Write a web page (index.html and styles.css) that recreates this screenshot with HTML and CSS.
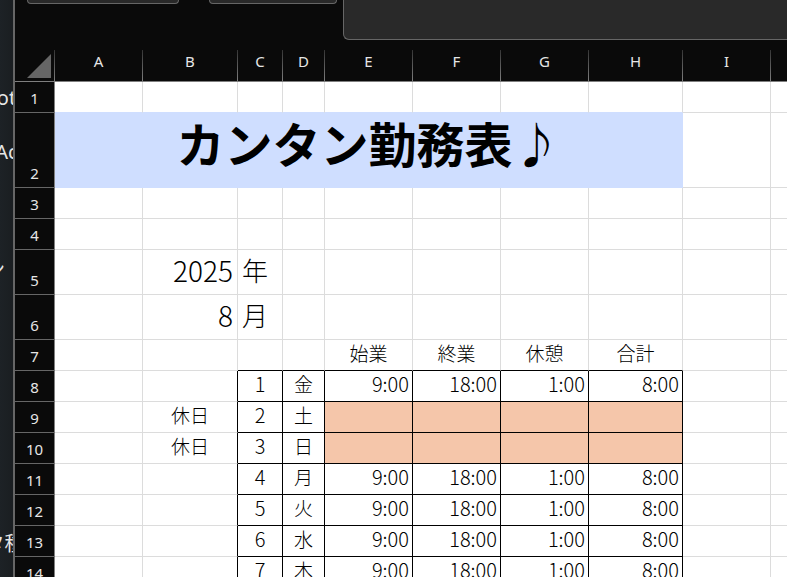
FILE: index.html
```html
<!DOCTYPE html>
<html lang="ja">
<head>
<meta charset="utf-8">
<title>カンタン勤務表</title>
<link rel="stylesheet" href="styles.css">
</head>
<body>
<aside class="side">
  <div class="side-item side-first">ot</div>
  <div class="side-item side-start">Ac</div>
  <div class="side-item side-tail">ン</div>
  <div class="side-item side-last">タ種</div>
</aside>
<main class="app">
  <div class="toolbar">
    <input class="name-box" type="text" aria-label="名前ボックス">
    <div class="tool-group"></div>
    <textarea class="formula" aria-label="数式バー"></textarea>
  </div>
  <table class="sheet">
    <colgroup><col class="w-head"><col class="w-m"><col class="w-b"><col class="w-c"><col class="w-d"><col class="w-m"><col class="w-m"><col class="w-m"><col class="w-h"><col class="w-m"><col></colgroup>
    <thead>
      <tr><th class="corner"><svg width="24" height="24" viewBox="0 0 24 24"><path d="M24 0V24H0Z" fill="#666"/></svg></th><th>A</th><th>B</th><th>C</th><th>D</th><th>E</th><th>F</th><th>G</th><th>H</th><th>I</th><th></th></tr>
    </thead>
    <tbody>
      <tr class="above-title"><th>1</th><td></td><td></td><td></td><td></td><td></td><td></td><td></td><td></td><td></td><td></td></tr>
      <tr class="title-row"><th>2</th><td class="title" colspan="8">カンタン勤務表♪</td><td></td><td></td></tr>
      <tr><th>3</th><td></td><td></td><td></td><td></td><td></td><td></td><td></td><td></td><td></td><td></td></tr>
      <tr><th>4</th><td></td><td></td><td></td><td></td><td></td><td></td><td></td><td></td><td></td><td></td></tr>
      <tr class="date"><th>5</th><td></td><td class="num">2025</td><td class="unit">年</td><td></td><td></td><td></td><td></td><td></td><td></td><td></td></tr>
      <tr class="date"><th>6</th><td></td><td class="num">8</td><td class="unit">月</td><td></td><td></td><td></td><td></td><td></td><td></td><td></td></tr>
      <tr class="labels"><th>7</th><td></td><td></td><td></td><td></td><td>始業</td><td>終業</td><td>休憩</td><td>合計</td><td></td><td></td></tr>
      <tr class="day"><th>8</th><td></td><td></td><td>1</td><td>金</td><td>9:00</td><td>18:00</td><td>1:00</td><td>8:00</td><td></td><td></td></tr>
      <tr class="day off"><th>9</th><td></td><td>休日</td><td>2</td><td>土</td><td></td><td></td><td></td><td></td><td></td><td></td></tr>
      <tr class="day off"><th>10</th><td></td><td>休日</td><td>3</td><td>日</td><td></td><td></td><td></td><td></td><td></td><td></td></tr>
      <tr class="day"><th>11</th><td></td><td></td><td>4</td><td>月</td><td>9:00</td><td>18:00</td><td>1:00</td><td>8:00</td><td></td><td></td></tr>
      <tr class="day"><th>12</th><td></td><td></td><td>5</td><td>火</td><td>9:00</td><td>18:00</td><td>1:00</td><td>8:00</td><td></td><td></td></tr>
      <tr class="day"><th>13</th><td></td><td></td><td>6</td><td>水</td><td>9:00</td><td>18:00</td><td>1:00</td><td>8:00</td><td></td><td></td></tr>
      <tr class="day"><th>14</th><td></td><td></td><td>7</td><td>木</td><td>9:00</td><td>18:00</td><td>1:00</td><td>8:00</td><td></td><td></td></tr>
    </tbody>
  </table>
</main>
</body>
</html>
```
FILE: styles.css
```css
* { box-sizing: border-box; }

body {
  margin: 0;
  height: 100vh;
  overflow: hidden;
  display: flex;
  background: #0a0a0a;
  font-family: "Noto Sans CJK JP", sans-serif;
}

/* Strip of the window behind the sheet */
.side {
  flex: none;
  width: 15px;
  overflow: hidden;
  display: flex;
  flex-direction: column;
  border-right: 2px solid #666;
  background: linear-gradient(to right, #1d2226, #1a1e21);
  color: #e6e6e6;
  font-family: "Noto Sans", "Noto Sans CJK JP", sans-serif;
  font-size: 20px;
  line-height: 28px;
}
.side-item {
  display: flex;
  justify-content: center;
  white-space: nowrap;
}
.side-first { padding-top: 84px; }
.side-start { padding-top: 26px; }
.side-tail { padding-top: 90px; padding-right: 8px; justify-content: flex-end; }
.side-last { padding-top: 246px; padding-right: 4px; }

.app {
  flex: 1;
  min-width: 0;
  overflow: hidden;
}

/* Toolbar */
.toolbar {
  display: flex;
  align-items: flex-start;
  height: 50px;
  padding-left: 12px;
}
.name-box, .tool-group, .formula {
  border: 1px solid #666;
  border-top: 0;
  background: #292929;
  color: #ddd;
  border-radius: 0 0 6px 6px;
  padding: 0;
  height: 4px;
}
.name-box { width: 152px; }
.tool-group { width: 128px; margin: 0 6px 0 30px; }
.formula {
  flex: 1;
  min-width: 0;
  height: 40px;
  border-right: 0;
  border-radius: 0 0 0 6px;
  resize: none;
}

/* Grid */
.sheet {
  width: 100%;
  table-layout: fixed;
  border-collapse: separate;
  border-spacing: 0;
}
.w-head { width: 40px; }
.w-m { width: 88px; }
.w-b { width: 95px; }
.w-c { width: 45px; }
.w-d { width: 42px; }
.w-h { width: 94px; }

th {
  padding: 0;
  border: 0 solid #666;
  background: #0a0a0a;
  color: #e6e6e6;
  font: 15px/20px "Noto Sans", sans-serif;
}
thead th {
  height: 32px;
  padding-bottom: 10px;
  border-width: 0 1px 1px 0;
  border-image: linear-gradient(#333, #808080) 1;
}
thead .corner {
  padding: 0 3px 3px 0;
  text-align: right;
  vertical-align: bottom;
}
.corner svg { display: block; margin-left: auto; }
tbody th {
  padding-bottom: 4px;
  vertical-align: bottom;
  border-width: 0 1px 1px 0;
  border-right-color: #808080;
}

td {
  height: 31px;
  padding: 0 3px 4px;
  border: 0 solid #dcdcdc;
  border-width: 0 1px 1px 0;
  background: #fff;
  color: #000;
  font-size: 19px;
  font-weight: 300;
  line-height: 26px;
  text-align: center;
  white-space: nowrap;
}
tr > :last-child { border-right-width: 0; }

.above-title td:nth-child(-n+9) { border-bottom-color: #cfdeff; }
.title-row td { height: 75px; }
.title-row .title {
  padding-bottom: 16px;
  border-color: #cfdeff;
  background: #cfdeff;
  font-size: 48px;
  font-weight: 700;
  line-height: 56px;
}

.date td { height: 45px; font-size: 26px; line-height: 40px; }
.date .num { padding-right: 4px; font-size: 28px; text-align: right; }
.date .unit { padding-left: 4px; text-align: left; }

.labels td:nth-child(n+4):nth-child(-n+9) { border-bottom-color: #000; }
.day td:nth-child(3) { border-right-color: #000; }
.day td:nth-child(n+4):nth-child(-n+9) { border-color: #000; }
.day td:nth-child(4) { font-size: 20px; }
.day td:nth-child(n+6) { font-size: 20px; text-align: right; }
.off td:nth-child(n+6):nth-child(-n+9) { background: #f5c6aa; }
```
